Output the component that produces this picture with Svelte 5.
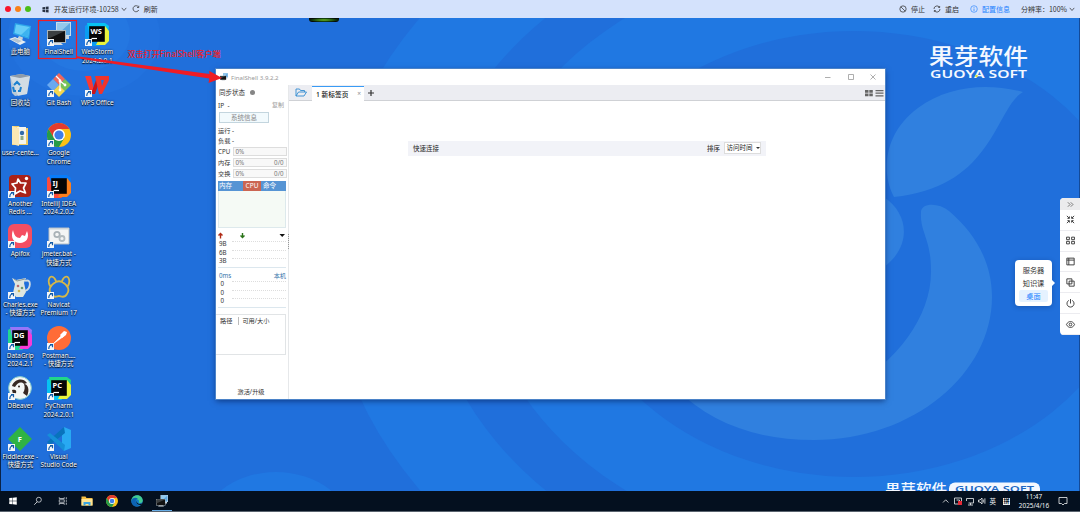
<script>
  const desktopIcons = [
    { icon: "pc", name: ["此电脑"] },
    { icon: "bin", name: ["回收站"] },
    { icon: "folder", name: ["user-cente..."] },
    { icon: "redis", name: ["Another", "Redis ..."], link: true },
    { icon: "apifox", name: ["Apifox"], link: true },
    { icon: "charles", name: ["Charles.exe", "- 快捷方式"], link: true },
    { icon: "jb", text: "DG", colors: ["#22d88f", "#9775f8", "#f63bd6"], name: ["DataGrip", "2024.2.1"], link: true },
    { icon: "dbeaver", name: ["DBeaver"], link: true },
    { icon: "fiddler", name: ["Fiddler.exe -", "快捷方式"], link: true },
    { icon: "shell", name: ["FinalShell"], link: true },
    { icon: "git", name: ["Git Bash"], link: true },
    { icon: "chrome", name: ["Google", "Chrome"], link: true },
    { icon: "jb", text: "IJ", colors: ["#fe4b3c", "#087cfa", "#fc801d"], name: ["IntelliJ IDEA", "2024.2.0.2"], link: true },
    { icon: "bat", name: ["jmeter.bat -", "快捷方式"], link: true },
    { icon: "navicat", name: ["Navicat", "Premium 17"], link: true },
    { icon: "postman", name: ["Postman....", "- 快捷方式"], link: true },
    { icon: "jb", text: "PC", colors: ["#07c3f2", "#21d789", "#e8f23c"], name: ["PyCharm", "2024.2.0.1"], link: true },
    { icon: "vscode", name: ["Visual", "Studio Code"], link: true },
    { icon: "jb", text: "WS", colors: ["#0a9df2", "#07c3f2", "#e8f23c"], name: ["WebStorm", "2024.2.0.1"], link: true },
    { icon: "wps", name: ["WPS Office"], link: true },
  ];

  const meters = [
    { label: "CPU", value: "0%", total: "" },
    { label: "内存", value: "0%", total: "0/0" },
    { label: "交换", value: "0%", total: "0/0" },
  ];

  const tools = ["fit", "grid", "layout", "copy", "power", "eye"];
  const taskApps = ["win", "search", "view", "files", "chrome", "edge", "shell"];

  let tab = $state("桌面");
</script>

{#snippet glyph(item)}
  <svg viewBox="0 0 24 24" class="glyph">
    {#if item.icon === "pc"}
      <path d="M7 1 23 4 21 17 5 12Z" fill="#2ca6ea" />
      <path d="M8 2.500 21.500 5 20 15 6.500 11Z" fill="#66cdf8" />
      <path d="M21.500 5 20 15 13 13Z" fill="#3db3f0" />
      <path d="M11 14 15 15.500 14 19 9 17.500Z" fill="#c7d3dc" />
      <path d="M1 17 7 15 18 20 12 23Z" fill="#e6edf2" />
      <path d="M3 17.500 7 16 14 19 10 21Z" fill="#b4c5d2" />
    {:else if item.icon === "bin"}
      <path d="M2 3 13 1 22 3 19 21 7 23 4 20Z" fill="#b9c9d6" />
      <path d="M2 3 12 5 22 3 19 21 10 23Z" fill="#dbe4ea" opacity=".7" />
      <path d="M2 3 13 1 22 3 12 5Z" fill="#8e9ba8" />
      <path d="M6 12l3-3 3 3M5 14l1 4h2M13 14l-1 4h-2" fill="none" stroke="#1c80cf" stroke-width="2" />
    {:else if item.icon === "folder"}
      <path d="M4 3h7l1 2h8v17H4Z" fill="#efcc67" />
      <path d="M9 4h9v17H9Z" fill="#f4f5ef" />
      <path d="M4 3 11 5v18L4 21Z" fill="#fbe8b4" />
      <circle cx="14" cy="10" r="2.200" fill="#316caa" />
      <path d="M12.500 13h3v4h-3Z" fill="#8cac83" />
    {:else if item.icon === "redis"}
      <rect x="1" y="1" width="22" height="22" rx="4" fill="#a92219" />
      <path d="M10 5 12.500 9 18 9 15.500 14 17.500 19 12 17 7 20 7.500 14 4 10 9 9Z" fill="none" stroke="#fff" stroke-width="1.700" stroke-linejoin="round" />
      <circle cx="18.500" cy="4.500" r="1.700" fill="#fff" />
    {:else if item.icon === "apifox"}
      <rect x="0" y="0" width="24" height="24" rx="6" fill="#f44e62" />
      <path d="M5 6C2 14 6 19 12 19s10-5 7-12l-2 5-3-1-2 3c-4 0-6-3-7-8Z" fill="#fff" />
    {:else if item.icon === "charles"}
      <path d="M4 3 8 5 18 3 16 8 18 17 15 22H8L5 18 7 9Z" fill="#dfe6df" />
      <path d="M17 6c7-3 6 8 0 10" fill="none" stroke="#cfdbe2" stroke-width="1.800" />
      <circle cx="10" cy="11" r="1.300" fill="#b76d74" />
      <circle cx="14" cy="13" r="1.300" fill="#6e9971" />
      <circle cx="11" cy="16" r="1.300" fill="#cfb64f" />
      <path d="M6 4 9 6 17 4" stroke="#8b9898" fill="none" />
    {:else if item.icon === "jb"}
      <path d="M0 4 3 2 15 24H4Q0 24 0 20Z" fill={item.colors[0]} />
      <path d="M2 1H20L24 4 23 13 4 10Z" fill={item.colors[1]} />
      <path d="M20 4 24 9V19L20 23H11Z" fill={item.colors[2]} />
      <rect x="4.200" y="4.200" width="15.600" height="15.600" fill="#050505" />
      <text x="5.600" y="12" font-size="7.500" font-weight="700" fill="#fff">{item.text}</text>
      <path d="M6.500 16.500h5.500" stroke="#fff" stroke-width="1.200" />
    {:else if item.icon === "dbeaver"}
      <circle cx="12" cy="12" r="11.400" fill="#f4f7f5" stroke="#80c7c9" />
      <path d="M4 10C6 3 15 1 19 7l-3 1c-3-3-7-1-9 3Z" fill="#372923" />
      <path d="M16 8c4 0 6 6 3 12l-4-3c2-3 2-6 1-9Z" fill="#372923" />
      <path d="M4 14c3-1 5 0 4 3l-3 1Z" fill="#372923" />
      <circle cx="11" cy="10.500" r="1" fill="#372923" />
    {:else if item.icon === "fiddler"}
      <path d="M12 0 24 12 12 24 0 12Z" fill="#2fb344" />
      <text x="9.700" y="14.800" font-size="7.500" font-weight="700" fill="#fff">F</text>
    {:else if item.icon === "shell"}
      <path d="M9 0H24V14H9Z" fill="#c7dceb" />
      <path d="M10 1H23V13H10Z" fill="#5ba5e0" />
      <path d="M10 1H23L12 11H10Z" fill="#93c8ec" />
      <path d="M17 14h5v3h-5Z" fill="#c9d4dc" />
      <path d="M0 8H19V21H0Z" fill="#a9b4ba" />
      <path d="M1 9H18V20H1Z" fill="#111" />
      <path d="M1 9H18L3 16H1Z" fill="#3c4042" />
      <path d="M6 21h8l2 2H4Z" fill="#d8dde0" />
    {:else if item.icon === "git"}
      <path d="M12 0 18 6 12 12 6 6Z" fill="#ee675c" />
      <path d="M6 6 12 12 6 18 0 12Z" fill="#6aa9f0" />
      <path d="M18 6 24 12 18 18 12 12Z" fill="#78c257" />
      <path d="M12 12 18 18 12 24 6 18Z" fill="#f4d64e" />
      <path d="M9 3l4 4v10M13 8l5 4" fill="none" stroke="#fff" stroke-width="1.300" />
      <circle cx="13" cy="8" r="1.400" fill="#fff" /><circle cx="18" cy="12" r="1.400" fill="#fff" /><circle cx="13" cy="17" r="1.400" fill="#fff" />
    {:else if item.icon === "chrome"}
      <circle cx="12" cy="12" r="12" fill="#fbc116" />
      <path d="M1.600 6A12 12 0 0 1 22.400 6H12L6.800 15Z" fill="#e33b2e" />
      <path d="M1.600 6 6.800 15H17.200L12 24A12 12 0 0 1 1.600 6Z" fill="#269b48" />
      <circle cx="12" cy="12" r="6" fill="#fff" />
      <circle cx="12" cy="12" r="4.600" fill="#3d7de8" />
    {:else if item.icon === "bat"}
      <path d="M2 4H22V20H2Z" fill="#f4f5f5" stroke="#b5bec5" />
      <path d="M2 4H22V5.500H2Z" fill="#cbd2d7" />
      <circle cx="10" cy="10.500" r="2.700" fill="none" stroke="#a9b2b7" stroke-width="1.800" />
      <circle cx="15" cy="14.500" r="2.500" fill="none" stroke="#b3bbbf" stroke-width="1.800" />
    {:else if item.icon === "navicat"}
      <path d="M3 11C0 5 3 0 6 2c2 1 3 4 3 5M21 11c3-6 0-11-3-9-2 1-3 4-3 5M9 7c-6 3-8 8-5 12 3 5 6 2 8 2s5 3 8-2c3-4 1-9-5-12-2-1-4-1-6 0Z" fill="none" stroke="#d5b849" stroke-width="1.800" />
    {:else if item.icon === "postman"}
      <circle cx="12" cy="12" r="12" fill="#ff6c37" />
      <path d="M6 18 15 9l1.500 1.500Z" fill="#fff" stroke="#fff" stroke-width=".6" />
      <path d="M13 9 17 5l3 1-1 3-4 3Z" fill="#fff" />
    {:else if item.icon === "vscode"}
      <path d="M17 0 24 3V21L17 24 15 21V4Z" fill="#28a9f2" />
      <path d="M17 0 0 15l3 3L18 6Z" fill="#0873bd" />
      <path d="M0 8 3 6 18 18 17 24Z" fill="#168fd9" />
    {:else if item.icon === "wps"}
      <path d="M0 3H6L10 21H6Z" fill="#fb3932" />
      <path d="M6 21 11 7H15L10 21Z" fill="#c9151a" />
      <path d="M10 3H24V7H16L17 13 19 7H24L17 21H14Z" fill="#f0342b" />
    {:else if item.icon === "win"}
      <path d="M3 5 11 4V11.500H3ZM12 4 21 3V11.500H12ZM3 12.500H11V20L3 19ZM12 12.500H21V21L12 20Z" fill="#fff" />
    {:else if item.icon === "search"}
      <circle cx="14" cy="9" r="6" fill="none" stroke="#e3e7eb" stroke-width="1.800" />
      <path d="M10 14 3 21" stroke="#e3e7eb" stroke-width="2" />
    {:else if item.icon === "view"}
      <path d="M3 3v3h12V3M3 21v-3h12v3M3 9h12v6H3ZM20 3v5M20 16v5M20 10v4" fill="none" stroke="#e3e7eb" stroke-width="1.700" />
    {:else if item.icon === "files"}
      <path d="M1 3H9L11 6H23V21H1Z" fill="#f5be42" />
      <path d="M1 8H23V21H1Z" fill="#ffe493" />
      <path d="M5 14H19V21H15V18H9V21H5Z" fill="#3ba4df" />
    {:else if item.icon === "edge"}
      <circle cx="12" cy="12" r="11.500" fill="#1680cb" />
      <path d="M1 9C4-2 22-3 23.500 11c0 5-6 6-8 4 3-6-5-10-14-3Z" fill="#42cb91" />
      <path d="M1 12C2 5 10 4 14 8c-7 1-6 10 2 12-6 6-15 1-15-8Z" fill="#0c63b5" />
      <path d="M13 10c-3 4 0 7 4 8l5-1-1 3c-8 0-13-4-8-10Z" fill="#06131f" />
    {/if}
    {#if item.link}
      <rect x="0" y="17" width="7" height="7" fill="#f4f6f8" />
      <path d="M1.800 23c0-2.500 1-4 3-4M3 18.600H5.500V21.300" fill="none" stroke="#145ca8" stroke-width="1.200" />
    {/if}
  </svg>
{/snippet}

{#snippet refresh()}
  <svg viewBox="0 0 16 16" class="small"><path d="M13.500 10A6 6 0 1 1 13 4M13.500 1.500V5H10" fill="none" stroke="currentColor" stroke-width="1.500" /></svg>
{/snippet}

{#snippet chevron()}
  <svg viewBox="0 0 16 16" class="chev"><path d="M2 5 8 12 14 5" fill="none" stroke="currentColor" stroke-width="2" /></svg>
{/snippet}

<div class="screen">
  <header class="topbar">
    <div class="left">
      <i class="dot red"></i><i class="dot orange"></i><i class="dot green"></i>
      <svg viewBox="0 0 16 16" class="small winlogo"><path d="M1 3 7 2v5.500H1ZM8.500 1.800 15 1v6.500H8.500ZM1 8.500h6V14l-6-1ZM8.500 8.500H15V15l-6.500-.8Z" fill="#273142" /></svg>
      <span class="env">开发运行环境-10258</span>
      {@render chevron()}
      <span class="reload">{@render refresh()}</span>
      <span>刷新</span>
    </div>
    <div class="right">
      <svg viewBox="0 0 16 16" class="small"><circle cx="8" cy="8" r="6.300" fill="none" stroke="currentColor" stroke-width="1.500" /><path d="M4 4 12 12" stroke="currentColor" stroke-width="1.500" /></svg>
      <span class="stop">停止</span>
      <svg viewBox="0 0 16 16" class="small"><path d="M2 8A6 6 0 0 1 13 4.500M14 8A6 6 0 0 1 3 11.500M13.300 2v3H10.500M2.700 14v-3H5.500" fill="none" stroke="currentColor" stroke-width="1.500" /></svg>
      <span class="restart">重启</span>
      <span class="config">
        <svg viewBox="0 0 16 16" class="small"><circle cx="8" cy="8" r="6.600" fill="none" stroke="currentColor" stroke-width="1.300" /><path d="M8 7v5M8 4v1.500" stroke="currentColor" stroke-width="1.500" /></svg>
        配置信息
      </span>
      <span class="ratio">分辨率：100%</span>
      {@render chevron()}
    </div>
  </header>

  <main class="desktop">
    <svg class="wallpaper" viewBox="0 18 1080 474">
      <rect y="18" width="1080" height="474" fill="#206fdb" />
      <ellipse cx="854" cy="254" rx="526" ry="418" fill="#2078e2" />
      <ellipse cx="854" cy="254" rx="429" ry="340" fill="#206fdb" />
      <ellipse cx="854" cy="254" rx="375" ry="298" fill="#2078e2" />
      <ellipse cx="854" cy="254" rx="281" ry="223" fill="#206fdb" />
      <ellipse cx="276" cy="532" rx="76" ry="60" fill="#2078e2" />
      <ellipse cx="84" cy="36" rx="76" ry="60" fill="#2272de" />
      <ellipse cx="84" cy="34" rx="46" ry="37" fill="#2477e1" />
      <path d="M921 213C920 203 938 202 949 211C976 234 992 263 992 297C992 373 914 440 814 440C756 440 711 423 675 388H848C897 363 932 315 931 270C931 239 920 232 921 213Z" fill="#3080df" />
      <path d="M894 197C880 171 885 132 918 108C949 85 989 83 1023 92C995 108 994 187 894 197Z" fill="#3080df" />
      <path d="M884 197C909 214 912 246 884 267Z" fill="#3080df" />
      <rect y="18" width="1" height="474" fill="#0a2348" />
      <rect x="1079" y="18" width="1" height="474" fill="#134a98" />
      <g class="brand">
        <text x="929" y="63.500" font-size="21.500" font-weight="500" textLength="99" lengthAdjust="spacingAndGlyphs">果芽软件</text>
        <text x="930" y="78" font-size="10.800" font-weight="600" textLength="97" lengthAdjust="spacingAndGlyphs">GUOYA SOFT</text>
        <circle cx="976.500" cy="76" r="1.300" fill="#d5dc39" />
        <text x="885" y="494" font-size="14" font-weight="500" textLength="62" lengthAdjust="spacingAndGlyphs">果芽软件</text>
        <rect x="949" y="482.500" width="91" height="14" rx="6" />
        <text x="955" y="492" font-size="9.500" font-weight="600" fill="#2069c4" textLength="79" lengthAdjust="spacingAndGlyphs">GUOYA SOFT</text>
      </g>
    </svg>

    <div class="led"></div>

    <div class="icons">
      {#each desktopIcons as item}
        <div class="shortcut">
          {@render glyph(item)}
          <div class="name">{#each item.name as line}<span>{line}</span>{/each}</div>
        </div>
      {/each}
    </div>

    <section class="window">
      <div class="titlebar">
        <div class="appicon">{@render glyph({ icon: "shell" })}</div>
        <span>FinalShell 3.9.2.2</span>
        <svg class="controls" viewBox="0 0 52 8"><path d="M0 4.500h5.500M23.500 1.500h5v5h-5ZM45.500 1.500l5 5M50.500 1.500l-5 5" fill="none" stroke="#999" stroke-width=".8" /></svg>
      </div>
      <div class="body">
        <aside>
          <div class="status">同步状态 <i></i></div>
          <div class="ip"><span>IP&nbsp; -</span><span class="muted">复制</span></div>
          <button class="sysinfo">系统信息</button>
          <div class="line">运行 -</div>
          <div class="line">负载 -</div>
          <div class="meters">
            {#each meters as m}
              <div class="meter"><span>{m.label}</span><div class="bar"><b>{m.value}</b><b>{m.total}</b></div></div>
            {/each}
          </div>
          <div class="proc">
            <div class="prochead"><span class="mem">内存</span><span class="cpu">CPU</span><span class="cmd">命令</span></div>
          </div>
          <div class="net">
            <svg class="arrows" viewBox="0 0 68 9">
              <path d="M2.500 7.500V3M.5 4.500l2-2 2 2" stroke="#b02b16" stroke-width="1.400" fill="none" />
              <path d="M24.500 2v4.500M22.500 4.500l2 2 2-2" stroke="#2b741a" stroke-width="1.400" fill="none" />
              <path d="M61.500 3H67L64.200 6Z" fill="#111" />
            </svg>
            <div class="scale"><span>9B</span></div>
            <div class="scale"><span>6B</span></div>
            <div class="scale"><span>3B</span></div>
          </div>
          <div class="net ping">
            <div class="host"><span>0ms</span><span>本机</span></div>
            <div class="scale zero"><span>0</span></div>
            <div class="scale zero"><span>0</span></div>
            <div class="scale zero"><span>0</span></div>
          </div>
          <div class="disk"><span>路径</span><span class="size">可用/大小</span></div>
          <div class="upgrade">激活/升级</div>
          <div class="grip"></div>
        </aside>
        <div class="content">
          <div class="tabs">
            <svg class="open" viewBox="0 0 24 18"><path d="M2 16V2h7l2 3h8v3M2 16 7 8h16l-5 8Z" fill="none" stroke="#318bd0" stroke-width="1.800" /></svg>
            <div class="tab"><span>1 新标签页</span><em>×</em></div>
            <svg class="plus" viewBox="0 0 8 8"><path d="M4 1v6M1 4h6" stroke="#333" stroke-width="1.200" /></svg>
            <svg class="modes" viewBox="0 0 20 8"><path d="M1 1h3.500v2.700H1ZM5.300 1h3.500v2.700H5.300ZM1 4.500h3.500v2.700H1ZM5.300 4.500h3.500v2.700H5.300ZM11.500 1h8v1.200h-8ZM11.500 3.600h8v1.200h-8ZM11.500 6.200h8v1.200h-8Z" fill="#666" /></svg>
          </div>
          <div class="quick">
            <span>快速连接</span>
            <span class="sort">排序</span>
            <div class="select">访问时间 <i></i></div>
          </div>
        </div>
      </div>
    </section>

    <svg class="note" viewBox="0 0 230 90">
      <rect x="38.500" y="20.500" width="38" height="38" fill="none" stroke="#ee1c25" stroke-width="1.200" />
      <path d="M77 56.200 209.500 74 209 70.800 222 78 208.500 83 209.300 78.500 77 58.200Z" fill="#ee1c25" />
      <text x="127.500" y="57" font-size="8" font-weight="500" textLength="93" lengthAdjust="spacingAndGlyphs" fill="#ee1c25">双击打开FinalShell客户端</text>
    </svg>

    <nav class="switcher">
      {#each ["服务器", "知识课", "桌面"] as item}
        <button class:active={tab === item} onclick={() => (tab = item)}>{item}</button>
      {/each}
    </nav>

    <div class="tools">
      <div class="fold">
        <svg viewBox="0 0 8 8"><path d="M1 1.500 3.500 4 1 6.500M4.300 1.500 6.800 4 4.300 6.500" /></svg>
      </div>
      {#each tools as tool}
        <div class="tool">
          <svg viewBox="0 0 16 16">
            {#if tool === "fit"}
              <path d="M1.500 1.500l4 4M6 2.500v3.500H2.500M14.500 1.500l-4 4M10 2.500v3.500h3.500M1.500 14.500l4-4M2.500 10h3.500v3.500M14.500 14.500l-4-4M13.500 10h-3.500v3.500" />
            {:else if tool === "grid"}
              <path d="M1 2h5v4.500h-5M15 2h-5v4.500h5M1 9.500h5v4.500h-5M15 9.500h-5v4.500h5M1 2v4.500M15 2v4.500M1 9.500v4.500M15 9.500v4.500" />
            {:else if tool === "layout"}
              <path d="M1.500 2h13v12h-13ZM1.500 5.500h13M5 2v12" />
            {:else if tool === "copy"}
              <path d="M1.500 1.500h9v9h-9ZM5.500 5.500h9v9h-9Z" />
            {:else if tool === "power"}
              <path d="M5 2.500a6.300 6.300 0 1 0 6 0M8 0v8" />
            {:else}
              <path d="M.8 8c3.200-7 11.200-7 14.400 0-3.200 7-11.200 7-14.400 0Z" /><circle cx="8" cy="8" r="2.400" />
            {/if}
          </svg>
        </div>
      {/each}
    </div>
  </main>

  <footer class="taskbar">
    {#each taskApps as app}
      <div class="task" class:running={app === "shell"}><div class="taskicon {app}">{@render glyph({ icon: app })}</div></div>
    {/each}
    <div class="tray">
      <svg viewBox="0 0 44 10" class="trayicons">
        <path d="M1 6.500 3.700 3.800 6.400 6.500" />
        <path d="M12.500 2h7v6h-7ZM14.500 4h3v3" /><rect x="16" y="5" width="4" height="4" fill="#e32936" stroke="none" />
        <path d="M24.500 2.500h7v4.500h-5M28.500 7v2M26 9h5M24.500 2.500v2.500" />
        <path d="M36.500 4h1.500l2-2v6l-2-2h-1.500ZM41.300 3.500v3M42.900 2.300v5.400" />
      </svg>
      <span>英</span>
      <b>拼</b>
      <div class="clock"><span>11:47</span><span>2025/4/16</span></div>
      <svg viewBox="0 0 10 10" class="bell"><path d="M1 1.500h8v6H6.500L5 9 3.500 7.500H1Z" /></svg>
    </div>
  </footer>
</div>

<style>
  :global(body) {
    margin: 0;
    overflow: hidden;
  }
  .screen {
    width: 1080px;
    height: 512px;
    display: flex;
    flex-direction: column;
    font-family: "Noto Sans", "Noto Sans CJK SC", sans-serif;
    font-size: 6.5px;
    color: #333;
  }
  svg {
    display: block;
    flex: none;
  }
  button {
    font: inherit;
    border: 0;
    padding: 0;
  }
  span {
    white-space: nowrap;
  }

  /* top bar */
  .topbar {
    height: 18px;
    flex: none;
    display: flex;
    justify-content: space-between;
    background: #d4e2fc;
    font-family: "Noto Sans CJK SC", sans-serif;
    font-size: 7px;
    line-height: 18px;
  }
  .left,
  .right {
    display: flex;
    align-items: center;
  }
  .left {
    padding-left: 5px;
  }
  .right {
    padding-right: 5px;
  }
  .env {
    letter-spacing: 0.08px;
  }
  .dot {
    width: 6px;
    height: 6px;
    border-radius: 50%;
    margin-right: 4px;
  }
  .red {
    background: #f9152b;
  }
  .orange {
    background: #f98019;
  }
  .green {
    background: #4cbd18;
  }
  .small {
    width: 8px;
    height: 8px;
  }
  .winlogo {
    width: 7px;
    height: 7px;
    margin: 0 5px 0 7px;
  }
  .chev {
    width: 6px;
    height: 6px;
    margin-left: 2px;
  }
  .reload {
    margin: 0 4px 0 5px;
  }
  .stop {
    margin: 0 8px 0 4px;
  }
  .restart {
    margin: 0 11px 0 4px;
  }
  .config {
    display: flex;
    align-items: center;
    gap: 4px;
    color: #2582ff;
    margin-right: 11px;
  }

  /* desktop */
  .desktop {
    position: relative;
    height: 473px;
    flex: none;
    overflow: hidden;
  }
  .wallpaper {
    position: absolute;
    width: 1080px;
    height: 474px;
  }
  .brand {
    fill: #f4f8ff;
  }
  .led {
    position: absolute;
    left: 309px;
    top: 0;
    width: 30px;
    height: 4px;
    border-radius: 0 0 3px 3px;
    background: radial-gradient(ellipse, #6cbb23, #123c0b 55%, #050a08 75%);
  }
  .icons {
    position: absolute;
    left: 1px;
    top: 4px;
    display: grid;
    grid-template-rows: repeat(9, 50.6px);
    grid-auto-columns: 38.5px;
    grid-auto-flow: column;
  }
  .shortcut {
    display: flex;
    flex-direction: column;
    align-items: center;
  }
  .glyph {
    width: 24px;
    height: 24px;
  }
  .shortcut:nth-child(19) {
    grid-column: 3;
    grid-row: 1;
  }
  .shortcut:nth-child(20) {
    grid-column: 3;
    grid-row: 2;
  }
  .name {
    display: flex;
    flex-direction: column;
    align-items: center;
    margin-top: 2px;
    color: #fff;
    font-size: 6.4px;
    line-height: 8.5px;
    text-shadow: 0 1px 1px #000, 0 0 2px #012;
  }

  /* window */
  .window {
    position: absolute;
    left: 216px;
    top: 51px;
    width: 669px;
    height: 330px;
    display: flex;
    flex-direction: column;
    background: #fff;
    outline: 1px solid #4b83c8;
    box-shadow: 0 2px 6px rgba(0, 20, 70, 0.6);
  }
  .titlebar {
    display: flex;
    align-items: center;
    height: 16px;
    flex: none;
    color: #999;
    font-size: 6.1px;
  }
  .appicon {
    margin: 0 3px 0 4px;
  }
  .appicon .glyph {
    width: 8px;
    height: 8px;
  }
  .controls {
    width: 52px;
    height: 8px;
    margin: 0 8px 0 auto;
  }
  .body {
    display: flex;
    flex: 1;
  }
  aside {
    position: relative;
    width: 72px;
    border-right: 1px solid #e6e8ea;
    display: flex;
    flex-direction: column;
    line-height: 9px;
  }
  .status {
    display: flex;
    align-items: center;
    gap: 5px;
    height: 14px;
    padding-left: 3px;
  }
  .status i {
    width: 5px;
    height: 5px;
    border-radius: 50%;
    background: #858585;
  }
  .ip {
    display: flex;
    align-items: center;
    justify-content: space-between;
    height: 13px;
    padding: 0 4px 0 2px;
  }
  .muted {
    color: #999;
    font-size: 6px;
  }
  .sysinfo {
    width: 50px;
    height: 11px;
    margin: 0 0 3px 3px;
    line-height: 9px;
    color: #888;
    background: #f2fafd;
    border: 1px solid #c3d5de;
    box-sizing: border-box;
  }
  .line {
    height: 10px;
    line-height: 10px;
    padding-left: 2px;
    font-size: 6.2px;
  }
  .meter {
    display: flex;
    align-items: center;
    height: 11.2px;
    font-size: 6.2px;
  }
  .meter > span {
    width: 14.5px;
    padding-left: 2px;
  }
  .bar {
    display: flex;
    justify-content: space-between;
    width: 48px;
    height: 7px;
    line-height: 7px;
    padding: 0 2px;
    border: 1px solid #ddd;
    background: #f8f8f8;
    color: #777;
  }
  .bar b {
    font-weight: 400;
  }
  .proc {
    height: 46px;
    margin: 1px 2px 3px;
    width: 66px;
    background: #f5faf5;
    border: 1px solid #dde9ec;
    border-top: 0;
  }
  .prochead {
    display: flex;
    height: 10px;
    margin: 0 -1px;
    line-height: 10px;
    color: #fff;
    background: #5694d4;
  }
  .mem {
    width: 24px;
    padding-left: 1px;
  }
  .cpu {
    width: 18px;
    text-align: center;
    background: #cb6552;
  }
  .cmd {
    padding-left: 2px;
  }
  .net {
    width: 68px;
    height: 36.5px;
    margin-left: 2px;
    border-bottom: 1px solid #dce7ee;
  }
  .arrows {
    width: 68px;
    height: 9px;
  }
  .scale {
    display: flex;
    align-items: center;
    gap: 5px;
    height: 8.5px;
    padding-left: 1px;
    font-size: 6.2px;
  }
  .scale span {
    width: 8px;
  }
  .scale::after {
    content: "";
    flex: 1;
    border-top: 1px dotted #ddd;
    margin-top: -4px;
  }
  .zero span {
    padding-left: 1.5px;
    width: 6.5px;
  }
  .ping {
    margin-top: 2.5px;
  }
  .host {
    display: flex;
    justify-content: space-between;
    color: #3674aa;
    padding-left: 1px;
    font-size: 6.2px;
    height: 9px;
  }
  .disk {
    display: flex;
    width: 70px;
    height: 41px;
    margin-top: 6px;
    box-sizing: border-box;
    border: 1px solid #e1e4e6;
    border-left: 0;
    padding: 1px 0 0 4px;
    font-size: 6.2px;
  }
  .size {
    height: 8px;
    margin: 1px 0 0 6px;
    padding-left: 3px;
    line-height: 7px;
    border-left: 1px solid #bbb;
  }
  .upgrade {
    margin: auto 0 3px;
    padding-right: 2px;
    text-align: center;
    font-size: 6.2px;
  }
  .grip {
    position: absolute;
    right: -1px;
    top: 149px;
    height: 15px;
    border-left: 1px dotted #999;
  }
  .content {
    flex: 1;
  }
  .tabs {
    display: flex;
    align-items: center;
    height: 16px;
    box-sizing: border-box;
    background: #ecedf2;
    border-bottom: 1px solid #cfd1d5;
  }
  .open {
    width: 12px;
    height: 9px;
    margin: 0 5.5px;
  }
  .tab {
    display: flex;
    align-items: center;
    justify-content: space-between;
    width: 45px;
    height: 14px;
    padding: 0 3px 0 4px;
    margin-top: 1px;
    background: #fff;
    border-top: 1px solid #399bf5;
    color: #111;
    font-size: 6.7px;
    font-weight: 500;
  }
  .tab em {
    color: #999;
    font-style: normal;
  }
  .plus {
    width: 8px;
    height: 8px;
    margin-left: 3px;
  }
  .modes {
    width: 20px;
    height: 8px;
    margin: 0 1px 0 auto;
  }
  .quick {
    display: flex;
    align-items: center;
    width: 348px;
    height: 15px;
    margin: 39.5px 0 0 119px;
    padding: 0 5px;
    background: #f2f3f8;
    color: #222;
  }
  .sort {
    margin: 0 4px 0 auto;
  }
  .select {
    display: flex;
    align-items: center;
    width: 32px;
    height: 10px;
    padding: 0 1.5px;
    gap: 3px;
    line-height: 10px;
    background: #fff;
    border: 1px solid #ddd;
    white-space: nowrap;
  }
  .select i {
    border: 2px solid transparent;
    border-top-color: #333;
    border-bottom: 0;
  }

  .note {
    position: absolute;
    left: 0;
    top: -18px;
    width: 230px;
    height: 90px;
  }

  /* floating panels */
  .switcher {
    position: absolute;
    left: 1015px;
    top: 242px;
    width: 37px;
    height: 46px;
    box-sizing: border-box;
    padding: 4px;
    display: flex;
    flex-direction: column;
    gap: 1px;
    background: #fff;
    border-radius: 4px;
    box-shadow: 0 1px 5px rgba(0, 30, 80, 0.3);
  }
  .switcher::after {
    content: "";
    position: absolute;
    left: 37px;
    top: 20px;
    border: 3px solid transparent;
    border-left-color: #fff;
    border-right: 0;
  }
  .switcher button {
    height: 12px;
    line-height: 12px;
    font-size: 7.2px;
    color: #333;
    background: none;
    border-radius: 2px;
  }
  .switcher .active {
    color: #2582ff;
    background: #e5f2ff;
  }
  .tools {
    position: absolute;
    left: 1060px;
    top: 180px;
    width: 20px;
    height: 137px;
    display: flex;
    flex-direction: column;
    overflow: hidden;
    border-radius: 4px 0 0 4px;
    background: #fff;
  }
  .fold {
    height: 12px;
    display: flex;
    align-items: center;
    justify-content: center;
    background: #ebebed;
  }
  .fold svg {
    width: 7px;
    height: 7px;
    fill: none;
    stroke: #444;
    stroke-width: 0.8;
  }
  .tool {
    flex: 1;
    display: flex;
    align-items: center;
    justify-content: center;
    border-bottom: 1px solid #ececf0;
  }
  .tool svg {
    width: 9px;
    height: 9px;
    fill: none;
    stroke: #333;
    stroke-width: 1.6;
    overflow: visible;
  }

  /* task bar */
  .taskbar {
    height: 21px;
    box-sizing: border-box;
    display: flex;
    flex: none;
    padding-left: 0.6px;
    background: #04101f;
    border-bottom: 1px solid #59636e;
    color: #f1f3f5;
  }
  .task {
    width: 24.8px;
    display: flex;
    align-items: center;
    justify-content: center;
    box-sizing: border-box;
  }
  .running {
    width: 20px;
    margin-left: 2.4px;
    border-bottom: 1px solid #68aee7;
  }
  .taskicon .glyph {
    width: 12px;
    height: 12px;
  }
  .taskicon.win .glyph,
  .taskicon.search .glyph,
  .taskicon.view .glyph {
    width: 10px;
    height: 10px;
  }
  .tray {
    display: flex;
    align-items: center;
    margin-left: auto;
    padding-right: 12px;
  }
  .trayicons,
  .bell {
    fill: none;
    stroke: #f0f2f4;
    stroke-width: 0.8;
  }
  .trayicons {
    width: 44px;
    height: 10px;
    margin-right: 4px;
  }
  .tray b {
    width: 7px;
    height: 7px;
    margin: 0 9px 0 7px;
    font-size: 6px;
    line-height: 7px;
    text-align: center;
    color: #04101f;
    background: #f1f3f5;
  }
  .clock {
    display: flex;
    flex-direction: column;
    align-items: center;
    width: 30px;
    line-height: 9.5px;
    font-size: 6.4px;
  }
  .bell {
    width: 10px;
    height: 10px;
    margin-left: 9px;
  }
</style>
